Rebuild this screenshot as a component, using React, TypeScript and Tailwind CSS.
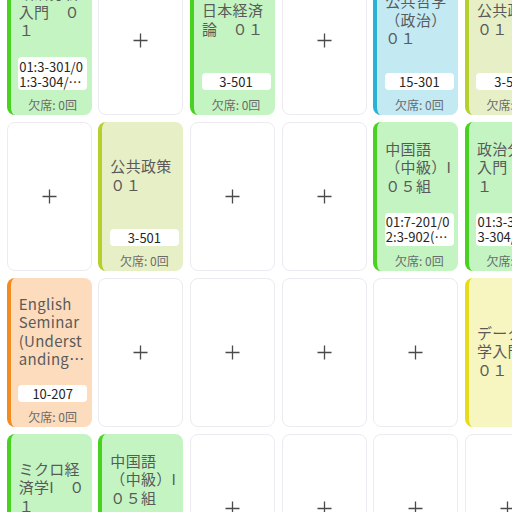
type Color = 'green' | 'blue' | 'olive' | 'orange' | 'yellow';

type Lesson = {
  title: string;
  color: Color;
  room?: string;
  multi?: boolean;
  absent?: number;
};

const colorClasses: Record<Color, string> = {
  green: 'border-[#47d21f] bg-[#c3f4c2]',
  blue: 'border-[#28b2d6] bg-[#c3e9f3]',
  olive: 'border-[#b6cf2d] bg-[#e7efc7]',
  orange: 'border-[#f38b1f] bg-[#fcdcbd]',
  yellow: 'border-[#e7dc1c] bg-[#f7f5c0]',
};

const seiji: Lesson = {
  title: '政治分析入門　０１',
  color: 'green',
  room: '01:3-301/01:3-304/01:3-305',
  multi: true,
  absent: 0,
};
const kokyoSeisaku: Lesson = { title: '公共政策　０１', color: 'olive', room: '3-501', absent: 0 };
const chugoku: Lesson = {
  title: '中国語（中級）I　０５組',
  color: 'green',
  room: '01:7-201/02:3-902(PC教室)',
  multi: true,
  absent: 0,
};

// 6 columns x 4 rows, null = empty slot
const timetable: (Lesson | null)[][] = [
  [
    seiji,
    null,
    { title: '日本経済論　０１', color: 'green', room: '3-501', absent: 0 },
    null,
    { title: '公共哲学（政治）　０１', color: 'blue', room: '15-301', absent: 0 },
    kokyoSeisaku,
  ],
  [
    null,
    kokyoSeisaku,
    null,
    null,
    chugoku,
    { ...seiji, room: '01:3-301/03-304/01:3-305' },
  ],
  [
    {
      title: 'English Seminar (Understanding Cultures) 01',
      color: 'orange',
      room: '10-207',
      absent: 0,
    },
    null,
    null,
    null,
    null,
    { title: 'データ科学入門　０１', color: 'yellow' },
  ],
  [
    { title: 'ミクロ経済学I　０１', color: 'green', room: '3-501', absent: 0 },
    { ...chugoku },
    null,
    null,
    null,
    null,
  ],
];

function EmptyCell() {
  return (
    <div className="flex items-center justify-center rounded-lg border border-[#ebebf1] bg-white">
      <svg width="15" height="15" viewBox="0 0 15 15" className="text-[#4a4a4a]">
        <path d="M7.5 0.5v14M0.5 7.5h14" stroke="currentColor" strokeWidth="1.3" />
      </svg>
    </div>
  );
}

function LessonCard({ lesson }: { lesson: Lesson }) {
  return (
    <div
      className={`flex flex-col overflow-hidden rounded-lg border-l-4 pr-[4.5px] pb-[2px] pl-[7.5px] ${colorClasses[lesson.color]}`}
    >
      <div className="flex flex-1 items-center">
        <p className="line-clamp-4 pl-[0.5px] text-[15px] leading-[18.5px] tracking-[0.3px] break-words text-[#5a5a5a]">
          {lesson.title}
        </p>
      </div>
      {lesson.room && (
        <div
          className={
            lesson.multi
              ? 'line-clamp-2 rounded-[4px] bg-white px-[1px] py-[1.5px] text-left text-[13px] leading-[15px] break-all text-[#262626]'
              : 'h-[17px] rounded-[4px] bg-white text-center text-[13px] leading-[17px] text-[#262626]'
          }
        >
          {lesson.room}
        </div>
      )}
      {lesson.absent !== undefined && (
        <div className="mt-[7px] text-center text-[12px] leading-4 text-[#6b6b6b]">
          欠席: {lesson.absent}回
        </div>
      )}
    </div>
  );
}

export default function App() {
  return (
    <div className="h-[512px] w-[512px] overflow-hidden bg-white font-['Noto_Sans_CJK_JP','Noto_Sans',sans-serif]">
      <div className="-mt-[33.5px] grid w-max auto-rows-[148.5px] grid-cols-[repeat(6,85px)] gap-x-[6.67px] gap-y-[7.4px] pl-[6.7px]">
        {timetable.map((row, r) =>
          row.map((cell, c) =>
            cell ? <LessonCard key={`${r}-${c}`} lesson={cell} /> : <EmptyCell key={`${r}-${c}`} />
          )
        )}
      </div>
    </div>
  );
}
